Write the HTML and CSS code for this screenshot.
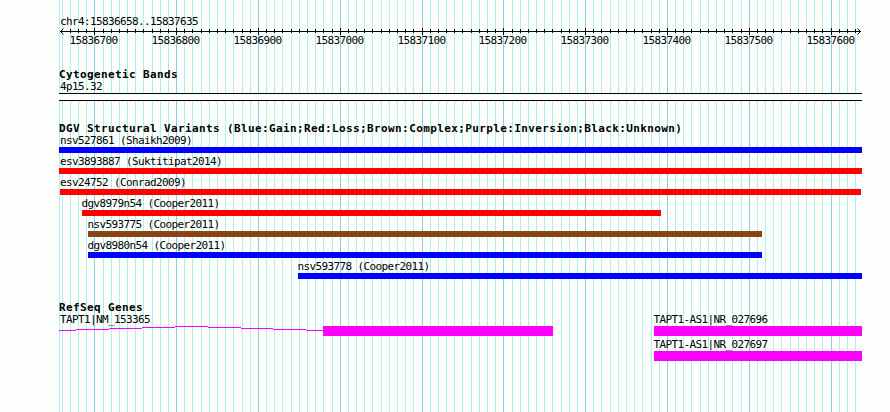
FILE: index.html
```html
<!DOCTYPE html>
<html lang="en">
<head>
    <meta charset="UTF-8">
    <meta name="viewport" content="width=device-width, initial-scale=1.0">
    <title>chr4:15836658..15837635</title>
    <link rel="stylesheet" href="styles.css">
</head>
<body>
    <div class="browser">
        <svg class="grid" id="grid" width="803" height="412"></svg>

        <div class="ruler">
            <div class="label">chr4:15836658..15837635</div>
            <svg class="scale" id="scale" width="803" height="19">
                <path class="axis" d="M1 3.5H802M4.5 .5L1.5 3.5L4.5 6.5M798.5 .5L801.5 3.5L798.5 6.5"/>
            </svg>
        </div>

        <div class="track">
            <h3 class="track-title">Cytogenetic Bands</h3>
            <div class="label">4p15.32</div>
            <div class="band"></div>
        </div>

        <div class="track variants">
            <h3 class="track-title">DGV Structural Variants (Blue:Gain;Red:Loss;Brown:Complex;Purple:Inversion;Black:Unknown)</h3>
            <div class="feature" style="margin-left: 0px">
                <div class="label">nsv527861 (Shaikh2009)</div>
                <div class="bar gain" style="width: 803px"></div>
            </div>
            <div class="feature" style="margin-left: 0px">
                <div class="label">esv3893887 (Suktitipat2014)</div>
                <div class="bar loss" style="width: 803px"></div>
            </div>
            <div class="feature edge" style="margin-left: 1px">
                <div class="label">esv24752 (Conrad2009)</div>
                <div class="bar loss" style="width: 801px"></div>
            </div>
            <div class="feature inside" style="margin-left: 23px">
                <div class="label">dgv8979n54 (Cooper2011)</div>
                <div class="bar loss" style="width: 579px"></div>
            </div>
            <div class="feature inside" style="margin-left: 29px">
                <div class="label">nsv593775 (Cooper2011)</div>
                <div class="bar complex" style="width: 674px"></div>
            </div>
            <div class="feature inside" style="margin-left: 29px">
                <div class="label">dgv8980n54 (Cooper2011)</div>
                <div class="bar gain" style="width: 674px"></div>
            </div>
            <div class="feature inside" style="margin-left: 239px">
                <div class="label">nsv593778 (Cooper2011)</div>
                <div class="bar gain" style="width: 564px"></div>
            </div>
        </div>

        <div class="track genes">
            <h3 class="track-title">RefSeq Genes</h3>
            <div class="gene-columns">
                <div class="gene">
                    <div class="label">TAPT1|NM_153365</div>
                    <div class="gene-model">
                        <svg class="intron" width="264" height="10">
                            <path d="M0 4.5H17M17 3.5H50M50 2.5H83M83 1.5H116M116 .5H149M149 1.5H182M182 2.5H214M214 3.5H247M247 4.5H264"/>
                        </svg>
                        <div class="exon" style="width: 230px"></div>
                    </div>
                </div>
                <div class="gene-stack">
                    <div class="gene inside">
                        <div class="label">TAPT1-AS1|NR_027696</div>
                        <div class="exon" style="width: 208px"></div>
                    </div>
                    <div class="gene inside">
                        <div class="label">TAPT1-AS1|NR_027697</div>
                        <div class="exon" style="width: 208px"></div>
                    </div>
                </div>
            </div>
        </div>
    </div>

    <script>
        const svgNS = 'http://www.w3.org/2000/svg';
        const grid = document.getElementById('grid');
        const scale = document.getElementById('scale');

        // x of a base position inside the panel
        function toX(pos) {
            return Math.floor(1.48 + (pos - 15836658) * 0.818);
        }

        function addRect(parent, cls, x, y, height) {
            const rect = document.createElementNS(svgNS, 'rect');
            rect.setAttribute('class', cls);
            rect.setAttribute('x', x);
            rect.setAttribute('y', y);
            rect.setAttribute('width', 1);
            rect.setAttribute('height', height);
            parent.appendChild(rect);
        }

        addRect(grid, 'minor', 0, 0, 412);

        for (let pos = 15836660; pos <= 15837630; pos += 10) {
            const x = toX(pos);
            const major = pos % 100 === 0;
            addRect(grid, major ? 'major' : 'minor', x, 0, 412);

            // no tick under the left arrow head
            if (x > 4) {
                addRect(scale, 'tick', x, major ? 0 : 1, major ? 7 : 4);
            }

            if (major) {
                const text = document.createElementNS(svgNS, 'text');
                text.setAttribute('x', x - 24.5);
                text.setAttribute('y', 16);
                text.textContent = pos;
                scale.appendChild(text);
            }
        }
    </script>
</body>
</html>
```
FILE: styles.css
```css
* {
    margin: 0;
    padding: 0;
    box-sizing: border-box;
}

body {
    background-color: #fdfffc;
    color: #000;
    font-family: 'DejaVu Sans Mono', monospace;
    font-size: 11px;
    line-height: 13px;
    letter-spacing: -0.62px;
    overflow: hidden;
}

.browser {
    position: relative;
    width: 803px;
    height: 412px;
    margin-left: 59px;
    padding-top: 15px;
}

/* guide lines behind all tracks */
.grid {
    position: absolute;
    top: 0;
    left: 0;
    z-index: -1;
}

.minor {
    fill: #afeeee;
}

.major {
    fill: #87ceeb;
}

.label {
    height: 13px;
    padding-left: 1px;
    white-space: nowrap;
}

.edge > .label {
    padding-left: 0;
}

.inside > .label {
    padding-left: 0;
    text-indent: -0.5px;
}

.scale {
    display: block;
}

.axis {
    fill: none;
    stroke: #000;
    stroke-width: 1;
}

.track {
    margin-top: 21px;
}

.track-title {
    height: 12px;
    font-size: 11px;
    font-weight: bold;
    letter-spacing: 0.38px;
    white-space: nowrap;
}

.band {
    height: 8px;
    background-color: #fdfffc;
    border-top: 1px solid #000;
    border-bottom: 1px solid #000;
}

.feature {
    height: 21px;
}

.bar {
    height: 6px;
}

.gain {
    background-color: #0000ff;
}

.loss {
    background-color: #ff0000;
}

.complex {
    background-color: #8b4513;
}

.genes {
    margin-top: 20px;
}

.gene-columns {
    display: flex;
    justify-content: space-between;
}

.gene {
    height: 25px;
}

.gene-model {
    display: flex;
}

.intron {
    fill: none;
    stroke: #ff00ff;
    stroke-width: 1;
}

.exon {
    height: 10px;
    background-color: #ff00ff;
}
```
